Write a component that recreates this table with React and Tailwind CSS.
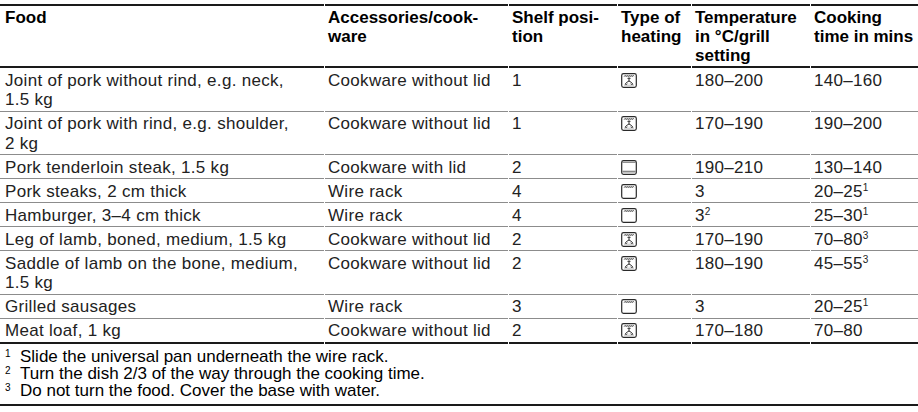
const ROWS = [
  { food: ['Joint of pork without rind, e.g. neck,', '1.5 kg'], acc: 'Cookware without lid', shelf: '1', icon: 'fan', temp: '180–200', time: '140–160' },
  { food: ['Joint of pork with rind, e.g. shoulder,', '2 kg'], acc: 'Cookware without lid', shelf: '1', icon: 'fan', temp: '170–190', time: '190–200' },
  { food: ['Pork tenderloin steak, 1.5 kg'], acc: 'Cookware with lid', shelf: '2', icon: 'topbottom', temp: '190–210', time: '130–140' },
  { food: ['Pork steaks, 2 cm thick'], acc: 'Wire rack', shelf: '4', icon: 'grill', temp: '3', time: '20–25', note: '1' },
  { food: ['Hamburger, 3–4 cm thick'], acc: 'Wire rack', shelf: '4', icon: 'grill', temp: '3', tempNote: '2', time: '25–30', note: '1' },
  { food: ['Leg of lamb, boned, medium, 1.5 kg'], acc: 'Cookware without lid', shelf: '2', icon: 'fan', temp: '170–190', time: '70–80', note: '3' },
  { food: ['Saddle of lamb on the bone, medium,', '1.5 kg'], acc: 'Cookware without lid', shelf: '2', icon: 'fan', temp: '180–190', time: '45–55', note: '3' },
  { food: ['Grilled sausages'], acc: 'Wire rack', shelf: '3', icon: 'grill', temp: '3', time: '20–25', note: '1' },
  { food: ['Meat loaf, 1 kg'], acc: 'Cookware without lid', shelf: '2', icon: 'fan', temp: '170–180', time: '70–80' },
];

const NOTES = [
  'Slide the universal pan underneath the wire rack.',
  'Turn the dish 2/3 of the way through the cooking time.',
  'Do not turn the food. Cover the base with water.',
];

const ZIGZAG = '3.2,3.6 4.2,2.4 5.2,3.6 6.2,2.4 7.2,3.6 8.2,2.4 9.2,3.6 10.2,2.4 11.2,3.6 12.2,2.4 12.8,3.2';

function HeatIcon({ type }) {
  return (
    <svg width="16" height="15" viewBox="0 0 16 15" className="block" fill="none" stroke="#2a2a2a">
      <rect x="0.7" y="0.7" width="14.6" height="13.6" rx="1.8" strokeWidth="1.2" />
      {type !== 'topbottom' && <polyline points={ZIGZAG} strokeWidth="0.9" />}
      {type === 'topbottom' && (
        <>
          <line x1="1.3" y1="2.3" x2="14.7" y2="2.3" stroke="#666" strokeWidth="0.9" />
          <line x1="1.3" y1="11.6" x2="14.7" y2="11.6" stroke="#888" strokeWidth="1.8" />
        </>
      )}
      {type === 'fan' && (
        <>
          <line x1="8" y1="4.4" x2="8" y2="8" strokeWidth="1" />
          <line x1="6.4" y1="5.4" x2="9.6" y2="5.4" strokeWidth="0.8" />
          <path d="M8 8 C6.6 8.8 5 9.6 4.2 11.2 C5 11.9 6 11.5 6.5 10.7" strokeWidth="1" />
          <path d="M8 8 C9.4 8.8 11 9.6 11.8 11.2 C11 11.9 10 11.5 9.5 10.7" strokeWidth="1" />
          <line x1="3" y1="12.2" x2="13" y2="12.2" stroke="#999" strokeWidth="0.6" />
        </>
      )}
    </svg>
  );
}

function Sup({ children }) {
  return <sup className="relative -top-[6px] align-baseline text-[10px] leading-none">{children}</sup>;
}

export default function App() {
  const head = 'border-y-2 border-[#1a1a1a] pt-[2px] pb-[1px] pl-[3px] align-top text-left font-bold leading-[19px] text-black whitespace-nowrap';
  return (
    <div className="w-[918px] overflow-hidden bg-white pt-[4px] text-[17px] text-[#222]" style={{ fontFamily: '"Liberation Sans", Arial, sans-serif' }}>
      <table className="-ml-px w-[920px] table-fixed border-separate border-spacing-x-px border-spacing-y-0">
        <colgroup>
          <col className="w-[324px]" />
          <col className="w-[183px]" />
          <col className="w-[108px]" />
          <col className="w-[73px]" />
          <col className="w-[118px]" />
          <col className="w-[107px]" />
        </colgroup>
        <thead>
          <tr>
            <th className={`${head} pl-[5px]`}>Food</th>
            <th className={head}>Accessories/cook-<br />ware</th>
            <th className={head}>Shelf posi-<br />tion</th>
            <th className={head}>Type of<br />heating</th>
            <th className={head}>Temperature<br />in °C/grill<br />setting</th>
            <th className={head}>Cooking<br />time in mins</th>
          </tr>
        </thead>
        <tbody>
          {ROWS.map((r, i) => {
            const last = i === ROWS.length - 1;
            const cell = `pt-[2.5px] pb-[1px] pl-[3px] align-top leading-[19.5px] tracking-[0.3px] whitespace-nowrap ${
              last ? 'border-b-2 border-[#1a1a1a]' : 'border-b-[1.5px] border-[#8c8c8c]'
            }`;
            return (
              <tr key={i}>
                <td className={`${cell} pl-[5px]`}>
                  {r.food.map((line, j) => (
                    <div key={j}>{line}</div>
                  ))}
                </td>
                <td className={cell}>{r.acc}</td>
                <td className={cell}>{r.shelf}</td>
                <td className={`${cell} pl-[3px]`}>
                  <div className="pt-[2px]">
                    <HeatIcon type={r.icon} />
                  </div>
                </td>
                <td className={cell}>
                  {r.temp}
                  {r.tempNote && <Sup>{r.tempNote}</Sup>}
                </td>
                <td className={cell}>
                  {r.time}
                  {r.note && <Sup>{r.note}</Sup>}
                </td>
              </tr>
            );
          })}
        </tbody>
      </table>
      <div className="border-b-2 border-[#1a1a1a] pt-[4px] pb-[5px] text-[17px] leading-[17px] text-black">
        {NOTES.map((n, i) => (
          <div key={i} className="flex">
            <span className="w-[20px] pl-[5px] pt-[1px] text-[10px] leading-[10px]">{i + 1}</span>
            <span>{n}</span>
          </div>
        ))}
      </div>
    </div>
  );
}
